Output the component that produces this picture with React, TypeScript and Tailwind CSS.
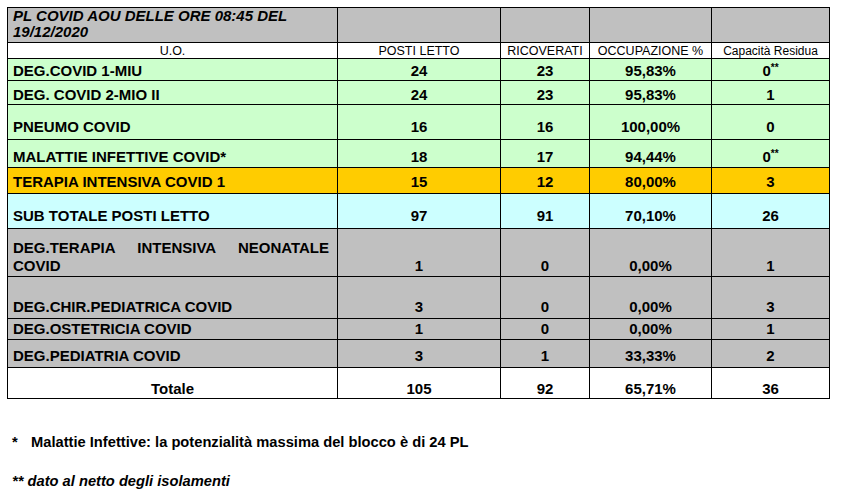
import React from "react";

type Row = {
  name: React.ReactNode;
  a: string;
  b: string;
  c: string;
  d: React.ReactNode;
  h: string;
  bg: string;
  pb: string;
  center?: boolean;
};

const ZeroStar = () => (
  <span className="inline-flex items-start">
    0<span className="text-[10px] leading-[10px] font-bold">**</span>
  </span>
);

const rows: Row[] = [
  { name: "DEG.COVID 1-MIU", a: "24", b: "23", c: "95,83%", d: <ZeroStar />, h: "h-[22px]", bg: "bg-[#ccffcc]", pb: "pb-[1px]" },
  { name: "DEG. COVID 2-MIO II", a: "24", b: "23", c: "95,83%", d: "1", h: "h-[24px]", bg: "bg-[#ccffcc]", pb: "pb-[1px]" },
  { name: "PNEUMO COVID", a: "16", b: "16", c: "100,00%", d: "0", h: "h-[35px]", bg: "bg-[#ccffcc]", pb: "pb-[4px]" },
  { name: "MALATTIE INFETTIVE COVID*", a: "18", b: "17", c: "94,44%", d: <ZeroStar />, h: "h-[28px]", bg: "bg-[#ccffcc]", pb: "pb-[2px]" },
  { name: "TERAPIA INTENSIVA COVID 1", a: "15", b: "12", c: "80,00%", d: "3", h: "h-[26px]", bg: "bg-[#ffcc00]", pb: "pb-[3px]" },
  { name: "SUB TOTALE POSTI LETTO", a: "97", b: "91", c: "70,10%", d: "26", h: "h-[35px]", bg: "bg-[#ccffff]", pb: "pb-[4px]" },
  {
    name: (
      <div className="flex flex-col w-[316px]">
        <div className="flex justify-between leading-[20px]">
          <span>DEG.TERAPIA</span>
          <span>INTENSIVA</span>
          <span>NEONATALE</span>
        </div>
        <div className="leading-[16px]">COVID</div>
      </div>
    ),
    a: "1", b: "0", c: "0,00%", d: "1", h: "h-[48px]", bg: "bg-[#c0c0c0]", pb: "pb-[2px]",
  },
  { name: "DEG.CHIR.PEDIATRICA COVID", a: "3", b: "0", c: "0,00%", d: "3", h: "h-[42px]", bg: "bg-[#c0c0c0]", pb: "pb-[3px]" },
  { name: "DEG.OSTETRICIA COVID", a: "1", b: "0", c: "0,00%", d: "1", h: "h-[21px]", bg: "bg-[#c0c0c0]", pb: "pb-[2px]" },
  { name: "DEG.PEDIATRIA COVID", a: "3", b: "1", c: "33,33%", d: "2", h: "h-[28px]", bg: "bg-[#c0c0c0]", pb: "pb-[3px]" },
  { name: "Totale", a: "105", b: "92", c: "65,71%", d: "36", h: "h-[31px]", bg: "bg-white", pb: "pb-[1px]", center: true },
];

const cell = "border-r border-b border-black flex";

export default function App() {
  return (
    <div className="w-[848px] h-[503px] bg-white text-black font-['Liberation_Sans',Arial,sans-serif] overflow-hidden">
      <div className="ml-[7px] mt-[7px] w-[823px] border-l border-t border-black">
        {/* title row */}
        <div className="flex h-[35px] bg-[#c0c0c0]">
          <div className={`${cell} w-[330px] pl-[5px] items-start`}>
            <div className="text-[15px] leading-[16px] font-bold italic">
              PL COVID AOU DELLE ORE 08:45 DEL
              <br />
              19/12/2020
            </div>
          </div>
          <div className={`${cell} w-[163px]`} />
          <div className={`${cell} w-[89px]`} />
          <div className={`${cell} w-[122px]`} />
          <div className={`${cell} w-[118px]`} />
        </div>
        {/* header row */}
        <div className="flex h-[16px] bg-white text-[12.5px] leading-[14px]">
          <div className={`${cell} w-[330px] items-center justify-center`}>U.O.</div>
          <div className={`${cell} w-[163px] items-center justify-center`}>POSTI LETTO</div>
          <div className={`${cell} w-[89px] items-center justify-center`}>RICOVERATI</div>
          <div className={`${cell} w-[122px] items-center justify-center`}>OCCUPAZIONE %</div>
          <div className={`${cell} w-[118px] items-center justify-center text-[12px]`}>Capacità Residua</div>
        </div>
        {rows.map((r, i) => (
          <div key={i} className={`flex ${r.h} ${r.bg} text-[15px] leading-[16px] font-bold`}>
            <div className={`${cell} w-[330px] items-end ${r.pb} ${r.center ? "justify-center" : "pl-[5px]"}`}>{r.name}</div>
            <div className={`${cell} w-[163px] items-end justify-center ${r.pb}`}>{r.a}</div>
            <div className={`${cell} w-[89px] items-end justify-center ${r.pb}`}>{r.b}</div>
            <div className={`${cell} w-[122px] items-end justify-center ${r.pb}`}>{r.c}</div>
            <div className={`${cell} w-[118px] items-end justify-center ${r.pb}`}>{r.d}</div>
          </div>
        ))}
      </div>
      <div className="ml-[12px] mt-[34px] text-[14.7px] leading-[18px] font-bold flex">
        <span className="w-[19px]">*</span>
        <span>Malattie Infettive: la potenzialità massima del blocco è di 24 PL</span>
      </div>
      <div className="ml-[12px] mt-[21px] text-[14.7px] leading-[18px] font-bold italic">
        ** dato al netto degli isolamenti
      </div>
    </div>
  );
}
